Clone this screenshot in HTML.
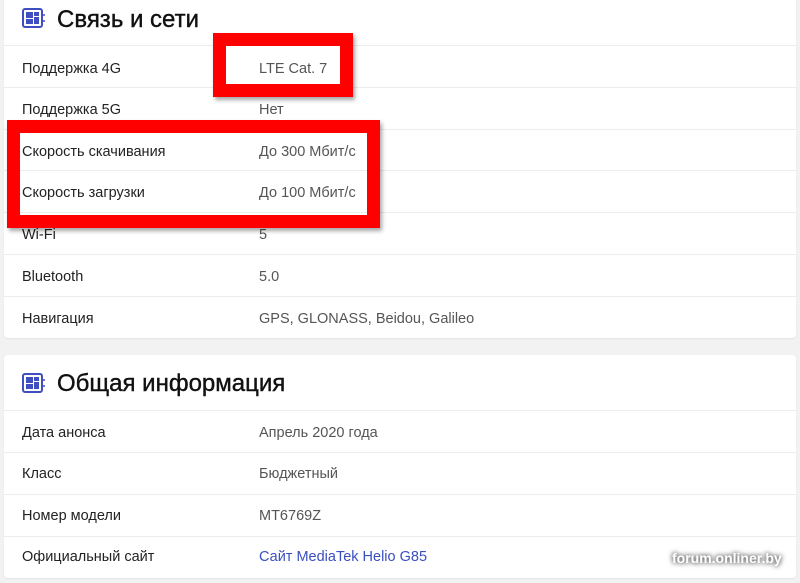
<!DOCTYPE html>
<html><head><meta charset="utf-8"><style>
body{margin:0;width:800px;height:583px;background:#f2f2f2;position:relative;overflow:hidden;font-family:"Liberation Sans","DejaVu Sans",sans-serif;}
.card{position:absolute;left:4px;width:792px;background:#fff;border-radius:4px;box-shadow:0 1px 2px rgba(0,0,0,.06);}
.t{position:absolute;left:53px;font-size:24px;font-weight:normal;color:#111;-webkit-text-stroke:0.4px #111;}
.ic{position:absolute;left:18px;}
.hr{position:absolute;left:0;right:0;height:1px;background:#ececec;}
.l{position:absolute;left:18px;font-size:14.5px;color:#222;margin-top:2px;}
.v{position:absolute;left:255px;font-size:14.5px;color:#555;margin-top:2px;}
.red{position:absolute;border:13px solid #f00;box-shadow:2px 3px 4px rgba(0,0,0,.35);}
.wm{position:absolute;left:672px;top:550px;font-size:14px;font-weight:bold;color:#fff;text-shadow:0 0 4px #555,0 0 6px #777;}
</style></head><body>
<div class="card" style="top:-6px;height:344px;">
 <svg class="ic" style="top:14px" width="24" height="20" viewBox="0 0 24 20"><rect x="1" y="1" width="19" height="18" rx="2" fill="none" stroke="#3f4fc0" stroke-width="2"/><rect x="4" y="4" width="7" height="6" fill="#3f4fc0"/><rect x="4" y="11" width="7" height="5" fill="#3f4fc0"/><rect x="12" y="4" width="5" height="4" fill="#3f4fc0"/><rect x="12" y="9" width="5" height="7" fill="#3f4fc0"/><path d="M20 7h3M20 13h3" stroke="#3f4fc0" stroke-width="1.5"/></svg>
 <div class="t" style="top:12px">Связь и сети</div>
 <div class="hr" style="top:51px"></div>
 <div class="l" style="top:65px">Поддержка 4G</div><div class="v" style="top:65px">LTE Cat. 7</div>
 <div class="hr" style="top:93px"></div>
 <div class="l" style="top:106px">Поддержка 5G</div><div class="v" style="top:106px">Нет</div>
 <div class="hr" style="top:135px"></div>
 <div class="l" style="top:148px">Скорость скачивания</div><div class="v" style="top:148px">До 300 Мбит/с</div>
 <div class="hr" style="top:176px"></div>
 <div class="l" style="top:189px">Скорость загрузки</div><div class="v" style="top:189px">До 100 Мбит/с</div>
 <div class="hr" style="top:218px"></div>
 <div class="l" style="top:231px">Wi-Fi</div><div class="v" style="top:231px">5</div>
 <div class="hr" style="top:260px"></div>
 <div class="l" style="top:273px">Bluetooth</div><div class="v" style="top:273px">5.0</div>
 <div class="hr" style="top:302px"></div>
 <div class="l" style="top:315px">Навигация</div><div class="v" style="top:315px">GPS, GLONASS, Beidou, Galileo</div>
</div>
<div class="card" style="top:355px;height:223px;">
 <svg class="ic" style="top:18px" width="24" height="20" viewBox="0 0 24 20"><rect x="1" y="1" width="19" height="18" rx="2" fill="none" stroke="#3f4fc0" stroke-width="2"/><rect x="4" y="4" width="7" height="6" fill="#3f4fc0"/><rect x="4" y="11" width="7" height="5" fill="#3f4fc0"/><rect x="12" y="4" width="5" height="4" fill="#3f4fc0"/><rect x="12" y="9" width="5" height="7" fill="#3f4fc0"/><path d="M20 7h3M20 13h3" stroke="#3f4fc0" stroke-width="1.5"/></svg>
 <div class="t" style="top:15px">Общая информация</div>
 <div class="hr" style="top:55px"></div>
 <div class="l" style="top:68px">Дата анонса</div><div class="v" style="top:68px">Апрель 2020 года</div>
 <div class="hr" style="top:97px"></div>
 <div class="l" style="top:109px">Класс</div><div class="v" style="top:109px">Бюджетный</div>
 <div class="hr" style="top:139px"></div>
 <div class="l" style="top:151px">Номер модели</div><div class="v" style="top:151px">MT6769Z</div>
 <div class="hr" style="top:181px"></div>
 <div class="l" style="top:192px">Официальный сайт</div><div class="v" style="top:192px;color:#3a4fc0">Сайт MediaTek Helio G85</div>
</div>
<div class="red" style="left:213px;top:33px;width:114px;height:38px;"></div>
<div class="red" style="left:7px;top:120px;width:347px;height:82px;"></div>
<div class="wm">forum.onliner.by</div>
</body></html>
